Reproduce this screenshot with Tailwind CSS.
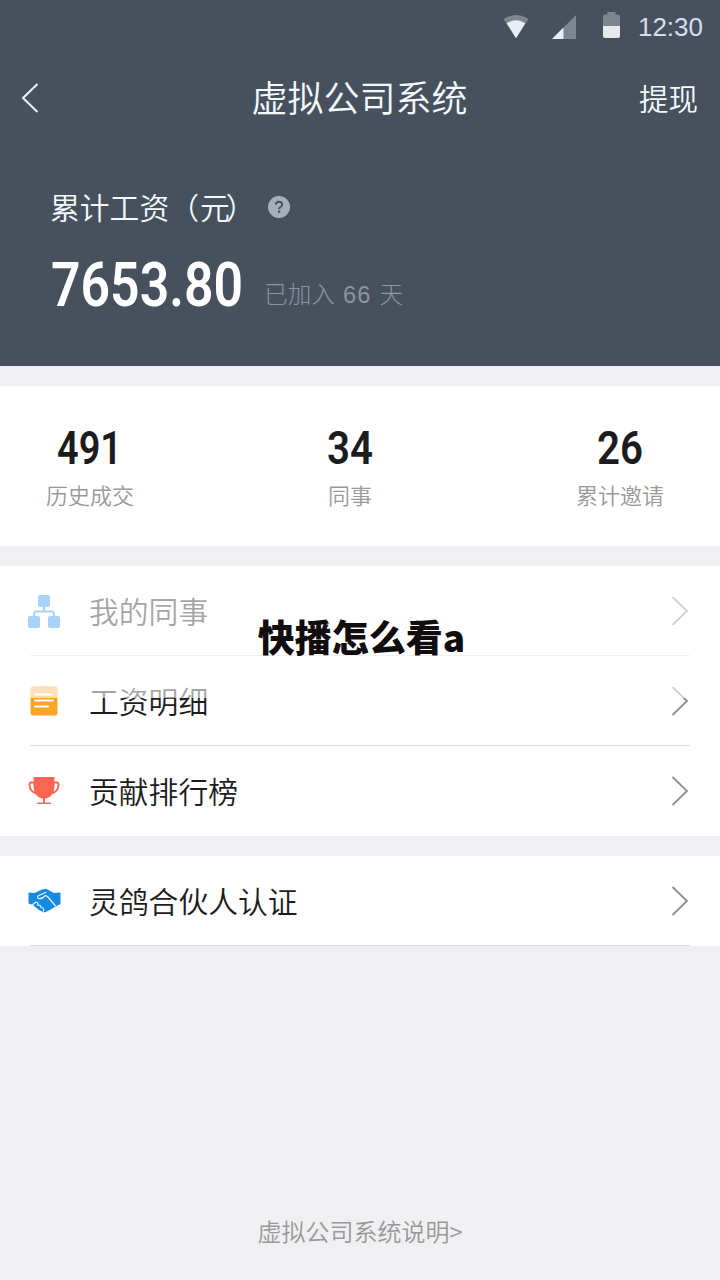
<!DOCTYPE html>
<html lang="zh-CN">
<head>
<meta charset="utf-8">
<title>虚拟公司系统</title>
<script src="https://cdn.jsdelivr.net/npm/@tailwindcss/browser@4"></script>
</head>
<body class="bg-[#f0f0f2]">
<div class="relative flex h-[1280px] w-[720px] flex-col overflow-hidden bg-[#f0f0f2] font-['Noto_Sans_CJK_SC',sans-serif] font-[350] text-[#1c1c20]">
  <header class="flex h-[366px] flex-col bg-[#47515e] text-[#f4faff]">
    <div class="flex h-[54px] items-center justify-end pr-[17px]">
      <svg class="mr-[23px]" width="26" height="26" viewBox="0 0 28 28"><path d="M.5 5.500Q14-3.500 27.500 5.500L14 26Z" fill="#7d8691"/><path d="M4 10Q14 3.500 24 10L14 26Z" fill="#e9eef3"/></svg>
      <svg class="mr-[27px]" width="24" height="24" viewBox="0 0 24 24"><path d="M0 24L24 0V24Z" fill="#7d8691"/><path d="M0 24L11.500 12.500V24Z" fill="#e9eef3"/></svg>
      <svg class="mr-[18px] mb-[4px]" width="17" height="26" viewBox="0 0 17 26"><path d="M4.500 0h8v2.500H15q2 0 2 2V14H0V4.500q0-2 2-2h2.500Z" fill="#7d858e"/><path d="M0 14h17v10q0 2-2 2H2q-2 0-2-2Z" fill="#e8e9eb"/></svg>
      <span class="font-['Liberation_Sans',sans-serif] text-[26px] leading-none font-normal whitespace-nowrap text-[#d4deeb]">12:30</span>
    </div>
    <div class="grid h-[88px] grid-cols-[1fr_auto_1fr] items-center pr-[22px] pl-[21px]">
      <svg width="18" height="30" viewBox="0 0 18 30" fill="none" stroke="#edf5fc" stroke-width="2"><path d="M16.500 1L2 15L16.500 29"/></svg>
      <h1 class="pb-[4px] text-[36px] leading-[54px]">虚拟公司系统</h1>
      <span class="justify-self-end pb-[2px] text-[29.500px] leading-[44px]">提现</span>
    </div>
    <div class="mt-[43px] flex h-[44px] items-center pl-[50px]">
      <span class="flex w-[218px] pb-[2px] text-[29.800px] leading-[44px] whitespace-nowrap">累计工资（<span class="ml-[1px] -mr-[4px]">元</span>）</span>
      <svg width="22" height="22" viewBox="0 0 22 22"><circle cx="11" cy="11" r="11" fill="#a7aeb5"/><path d="M7.800 8.600Q8 5.800 11 5.800Q14.200 5.800 14.200 8.500Q14.200 10 12.500 11Q11.100 11.900 11.100 13.300" fill="none" stroke="#47515e" stroke-width="1.900"/><rect x="10" y="14.600" width="2.200" height="2.200" fill="#47515e"/></svg>
    </div>
    <div class="mt-[18px] flex h-[76px] items-center pl-[51px]">
      <svg class="overflow-visible" width="213" height="60" viewBox="0 0 213 60"><text x="0" y="51" textLength="192" lengthAdjust="spacingAndGlyphs" class="fill-white font-['Roboto',sans-serif] text-[62px] font-semibold">7653.80</text></svg>
      <span class="pt-[18px] text-[23.700px] leading-[36px] font-light whitespace-nowrap text-[#8b949f]">已加入<span class="mx-[8px] font-['Liberation_Sans',sans-serif] tracking-[1px]">66</span>天</span>
    </div>
  </header>

  <section class="mt-5 grid h-[160px] grid-cols-[88px_88px_88px] gap-x-[177px] bg-white pl-[46px] pt-[39px]">
    <div class="flex flex-col items-center">
      <svg class="overflow-visible" width="66" height="44" viewBox="0 0 66 44"><text x="0" y="39" textLength="65" lengthAdjust="spacingAndGlyphs" class="fill-[#1c1c20] font-['Roboto',sans-serif] text-[47px] font-semibold">491</text></svg>
      <span class="mt-[9px] text-[22px] leading-[32px] whitespace-nowrap text-[#999]">历史成交</span>
    </div>
    <div class="-ml-[5px] mr-[5px] flex flex-col items-center">
      <svg class="overflow-visible" width="46" height="44" viewBox="0 0 46 44"><text x="0" y="39" textLength="46" lengthAdjust="spacingAndGlyphs" class="fill-[#1c1c20] font-['Roboto',sans-serif] text-[47px] font-semibold">34</text></svg>
      <span class="mt-[9px] text-[22px] leading-[32px] whitespace-nowrap text-[#999]">同事</span>
    </div>
    <div class="flex flex-col items-center">
      <svg class="overflow-visible" width="46" height="44" viewBox="0 0 46 44"><text x="0" y="39" textLength="46" lengthAdjust="spacingAndGlyphs" class="fill-[#1c1c20] font-['Roboto',sans-serif] text-[47px] font-semibold">26</text></svg>
      <span class="mt-[9px] text-[22px] leading-[32px] whitespace-nowrap text-[#999]">累计邀请</span>
    </div>
  </section>

  <section class="mt-5 flex h-[270px] flex-col bg-white px-[30px] text-[29.800px]">
    <div class="flex h-[90px] items-center border-b border-[#dcdce0]">
      <svg class="-ml-[2px] mr-[28px] mt-[2px]" width="32" height="34" viewBox="0 0 32 34" fill="#2a8fee"><rect x="10" y="0" width="12" height="12" rx="2"/><rect x="0" y="21" width="12" height="12" rx="2"/><rect x="20" y="21" width="12" height="12" rx="2"/><path d="M16 11v6M6 22v-3q0-2.500 2.500-2.500h15q2.500 0 2.500 2.500v3" fill="none" stroke="#2a8fee" stroke-width="2.200"/></svg>
      <span class="flex-1 pl-[1px]">我的同事</span>
      <svg class="mr-[1px]" width="18" height="30" viewBox="0 0 18 30" fill="none" stroke="#8e8e92" stroke-width="1.800"><path d="M1.500 1L16 15L1.500 29"/></svg>
    </div>
    <div class="flex h-[90px] items-center border-b border-[#dcdce0]">
      <svg class="mt-[1px] mr-[30px]" width="28" height="30" viewBox="0 0 28 30"><rect x=".5" y=".5" width="27" height="29" rx="3" fill="#fba426"/><path d="M.5 10V3.500q0-3 3-3h21q3 0 3 3V10Z" fill="#f7b25a"/><path d="M5.500 8.500h16M5 14.500h18M5 20.500h13" stroke="#fff" stroke-width="1.900" stroke-linecap="round"/></svg>
      <span class="flex-1 pl-[1px]">工资明细</span>
      <svg class="mr-[1px]" width="18" height="30" viewBox="0 0 18 30" fill="none" stroke="#8e8e92" stroke-width="1.800"><path d="M1.500 1L16 15L1.500 29"/></svg>
    </div>
    <div class="flex h-[90px] items-center">
      <svg class="-ml-[2px] mr-[28px]" width="32" height="28" viewBox="0 0 32 28"><path d="M5.500 0h21v9q0 10.500-8.500 12.500h-1v4H22q1 0 1 .8v.7H9v-.7q0-.8 1-.8h5v-4h-1Q5.500 19.500 5.500 9Z" fill="#fa6651"/><path d="M6.500 5.500H3.200Q1.300 5.500 1.500 8Q2 15.500 9 16.500M25.500 5.500h3.300Q30.700 5.500 30.500 8Q30 15.500 23 16.500" fill="none" stroke="#fa6651" stroke-width="1.900"/></svg>
      <span class="flex-1 pb-[1px] pl-[1px]">贡献排行榜</span>
      <svg class="mr-[1px]" width="18" height="30" viewBox="0 0 18 30" fill="none" stroke="#8e8e92" stroke-width="1.800"><path d="M1.500 1L16 15L1.500 29"/></svg>
    </div>
  </section>

  <section class="mt-5 h-[90px] bg-white px-[30px] text-[29.800px]">
    <div class="flex h-[90px] items-center border-b border-[#dcdce0]">
      <svg class="-ml-[2px] mr-[27px]" width="33" height="26" viewBox="0 0 33 26"><path d="M.5 4.500L6.500 5L14 1.500L18 .8L26 5L32.500 4.500V16L27.500 18.500L22 22L16.500 24.500L11 22L5 17L.5 15.500Z" fill="#1689e0"/><path d="M18.500 4L10.300 7.800Q8.800 9.500 10.500 10.500Q13.500 11.500 17.500 7.500L19.500 8.500L27.500 18" fill="none" stroke="#e4f7ff" stroke-width="1.200" stroke-linejoin="round"/><path d="M3.500 17.500L8 14Q10.500 14.500 10 17.500Q13 16.500 13 19.500Q16.500 19.500 15.500 23.500" fill="none" stroke="#e4f7ff" stroke-width="1.200" stroke-linejoin="round"/></svg>
      <span class="flex-1 pl-[1px]">灵鸽合伙人认证</span>
      <svg class="mr-[1px]" width="18" height="30" viewBox="0 0 18 30" fill="none" stroke="#8e8e92" stroke-width="1.800"><path d="M1.500 1L16 15L1.500 29"/></svg>
    </div>
  </section>

  <footer class="mt-auto flex h-[98px] items-center justify-center text-[24px] text-[#999]">虚拟公司系统说明&gt;</footer>

  <div class="absolute top-[578px] left-0 flex h-[120px] w-full items-center justify-center bg-white/60">
    <span class="pb-[3px] pl-[3px] text-[37px] leading-none font-black whitespace-nowrap text-[#110c0d]">快播怎么看a</span>
  </div>
</div>
</body>
</html>
